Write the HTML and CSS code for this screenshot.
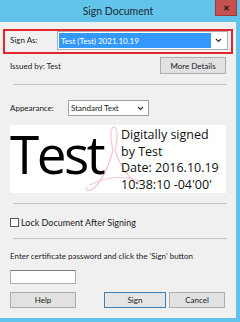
FILE: index.html
```html
<!DOCTYPE html>
<html lang="en">
<head>
  <meta charset="UTF-8" />
  <title>Sign Document</title>
  <link rel="stylesheet" href="styles.css">
</head>
<body>
  <div class="window">
    <div class="titlebar">
      <span class="title">Sign Document</span>
      <span class="close">&#x2715;</span>
    </div>

    <div class="client">
      <div class="sign-as">
        <span class="label">Sign As:</span>
        <div class="combo combo-wide">
          <span class="combo-value selected">Test (Test) 2021.10.19</span>
          <svg class="chevron" width="7" height="5" viewBox="0 0 7 5"><path d="M1 1 L3.5 3.5 L6 1" fill="none" stroke="#333" stroke-width="1.2"/></svg>
        </div>
      </div>

      <div class="row issued">
        <span>Issued by: Test</span>
        <button class="btn btn-more">More Details</button>
      </div>

      <div class="sep"></div>

      <div class="row appearance">
        <span class="label label-app">Appearance:</span>
        <div class="combo combo-small">
          <span class="combo-value">Standard Text</span>
          <svg class="chevron" width="7" height="5" viewBox="0 0 7 5"><path d="M1 1 L3.5 3.5 L6 1" fill="none" stroke="#333" stroke-width="1.2"/></svg>
        </div>
      </div>

      <div class="preview">
        <!-- faint acrobat mark behind the name -->
        <svg class="mark" width="216" height="68" viewBox="0 0 216 68">
          <g fill="none" stroke="#f5c3c8" stroke-width="1.1">
            <path d="M103 25 C100 13 100 3 104 2 C108 3 108 13 105 25"/>
            <path d="M103 25 C99 40 93 55 84 63 C79 67 74 66 77 62"/>
            <path d="M105 25 C110 40 118 52 126 58 C130 61 131 56 126 55"/>
            <path d="M80 60 C95 52 112 51 126 55"/>
          </g>
        </svg>
        <span class="big-name">Test</span>
        <div class="details">
          Digitally signed<br>
          by Test<br>
          Date: 2016.10.19<br>
          10:38:10 -04'00'
        </div>
      </div>

      <div class="sep sep-lower"></div>

      <label class="check">
        <span class="box"></span>
        Lock Document After Signing
      </label>

      <div class="sep sep-check"></div>

      <p class="hint">Enter certificate password and click the 'Sign' button</p>

      <div class="password"></div>

      <div class="buttons">
        <button class="btn btn-help">Help</button>
        <button class="btn btn-sign">Sign</button>
        <button class="btn btn-cancel">Cancel</button>
      </div>
    </div>
  </div>
</body>
</html>
```

FILE: styles.css
```css
* {
  box-sizing: border-box;
  margin: 0;
  padding: 0;
}

body {
  width: 240px;
  height: 322px;
  overflow: hidden;
  font-family: Lato, 'Liberation Sans', sans-serif;
  font-size: 8px;
  color: #1a1a1a;
}

.window {
  width: 240px;
  height: 322px;
  background: #62c4ea;
  display: flex;
  flex-direction: column;
}

.titlebar {
  height: 22px;
  position: relative;
  display: flex;
  align-items: center;
  justify-content: center;
  padding-right: 4px;
}

.title {
  font-size: 10.5px;
  color: #1c2b33;
}

.close {
  position: absolute;
  top: 0;
  right: 3px;
  width: 22px;
  height: 16px;
  background: #c75050;
  border: 1px solid #9e3a3a;
  border-top: none;
  color: #1a1a1a;
  font-size: 8px;
  font-weight: bold;
  display: flex;
  align-items: center;
  justify-content: center;
}

.client {
  flex: 1;
  margin: 0 4px 4px 0;
  background: #f0f0f0;
  display: flex;
  flex-direction: column;
}

.sign-as {
  margin: 7px 3px 0 3px;
  height: 25px;
  border: 2px solid #e3262b;
  display: flex;
  align-items: flex-start;
  padding: 0 3px 2px 5px;
}

.sign-as .label {
  width: 47px;
  line-height: 19px;
}

.combo {
  display: flex;
  align-items: center;
  background: #fff;
  border: 1px solid #abadb3;
}

.combo-wide {
  width: 171px;
  height: 19px;
  padding: 1px;
}

.combo-value {
  flex: 1;
  height: 100%;
  display: flex;
  align-items: center;
  padding-left: 2px;
  white-space: nowrap;
}

.selected {
  background: #3399ff;
  color: #fff;
}

.chevron {
  margin: 0 4px 0 4px;
}

.row {
  display: flex;
  align-items: center;
  padding: 0 10px;
}

.issued {
  margin-top: 3px;
  height: 17px;
  justify-content: space-between;
}

.btn {
  font-family: inherit;
  font-size: 8px;
  color: #1a1a1a;
  background: #e1e1e1;
  border: 1px solid #adadad;
  height: 17px;
}

.btn-more {
  width: 66px;
}

.sep {
  margin: 10px 9px 0 13px;
  height: 1px;
  background: #c5c5c5;
}

.appearance {
  margin-top: 15px;
  height: 16px;
}

.label-app {
  width: 58px;
}

.combo-small {
  width: 81px;
  height: 16px;
  border-color: #a0a0a0;
}

.preview {
  position: relative;
  margin: 9px 10px 0 10px;
  height: 68px;
  background: #fff;
  display: flex;
  align-items: flex-start;
}

.mark {
  position: absolute;
  left: 0;
  top: 0;
}

.big-name {
  position: relative;
  font-family: 'Open Sans', sans-serif;
  font-size: 53px;
  letter-spacing: -2.5px;
  line-height: 58px;
  width: 111px;
  color: #000;
}

.details {
  position: relative;
  font-family: 'Open Sans', sans-serif;
  font-size: 12.5px;
  line-height: 16.7px;
  margin-top: 2px;
  color: #111;
  white-space: nowrap;
}

.sep-lower {
  margin-top: 10px;
}

.check {
  margin: 13px 0 0 10px;
  height: 11px;
  display: flex;
  align-items: center;
  gap: 2px;
  font-size: 9px;
}

.box {
  width: 9px;
  height: 9px;
  background: #fff;
  border: 1px solid #555;
}

.sep-check {
  margin-top: 10px;
}

.hint {
  margin: 12px 0 0 10px;
  line-height: 11px;
}

.password {
  margin: 8px 0 0 10px;
  width: 66px;
  height: 14px;
  background: #fff;
  border: 1px solid #abadb3;
  border-top-color: #7a7a7a;
}

.buttons {
  margin-top: 8px;
  padding-left: 10px;
  display: flex;
}

.btn-help {
  width: 66px;
  height: 16px;
}

.btn-sign {
  width: 62px;
  height: 16px;
  margin-left: 28px;
  border-color: #3c7fb1;
  background: #e5e5e5;
}

.btn-cancel {
  width: 56px;
  height: 16px;
  margin-left: 3px;
}
```
